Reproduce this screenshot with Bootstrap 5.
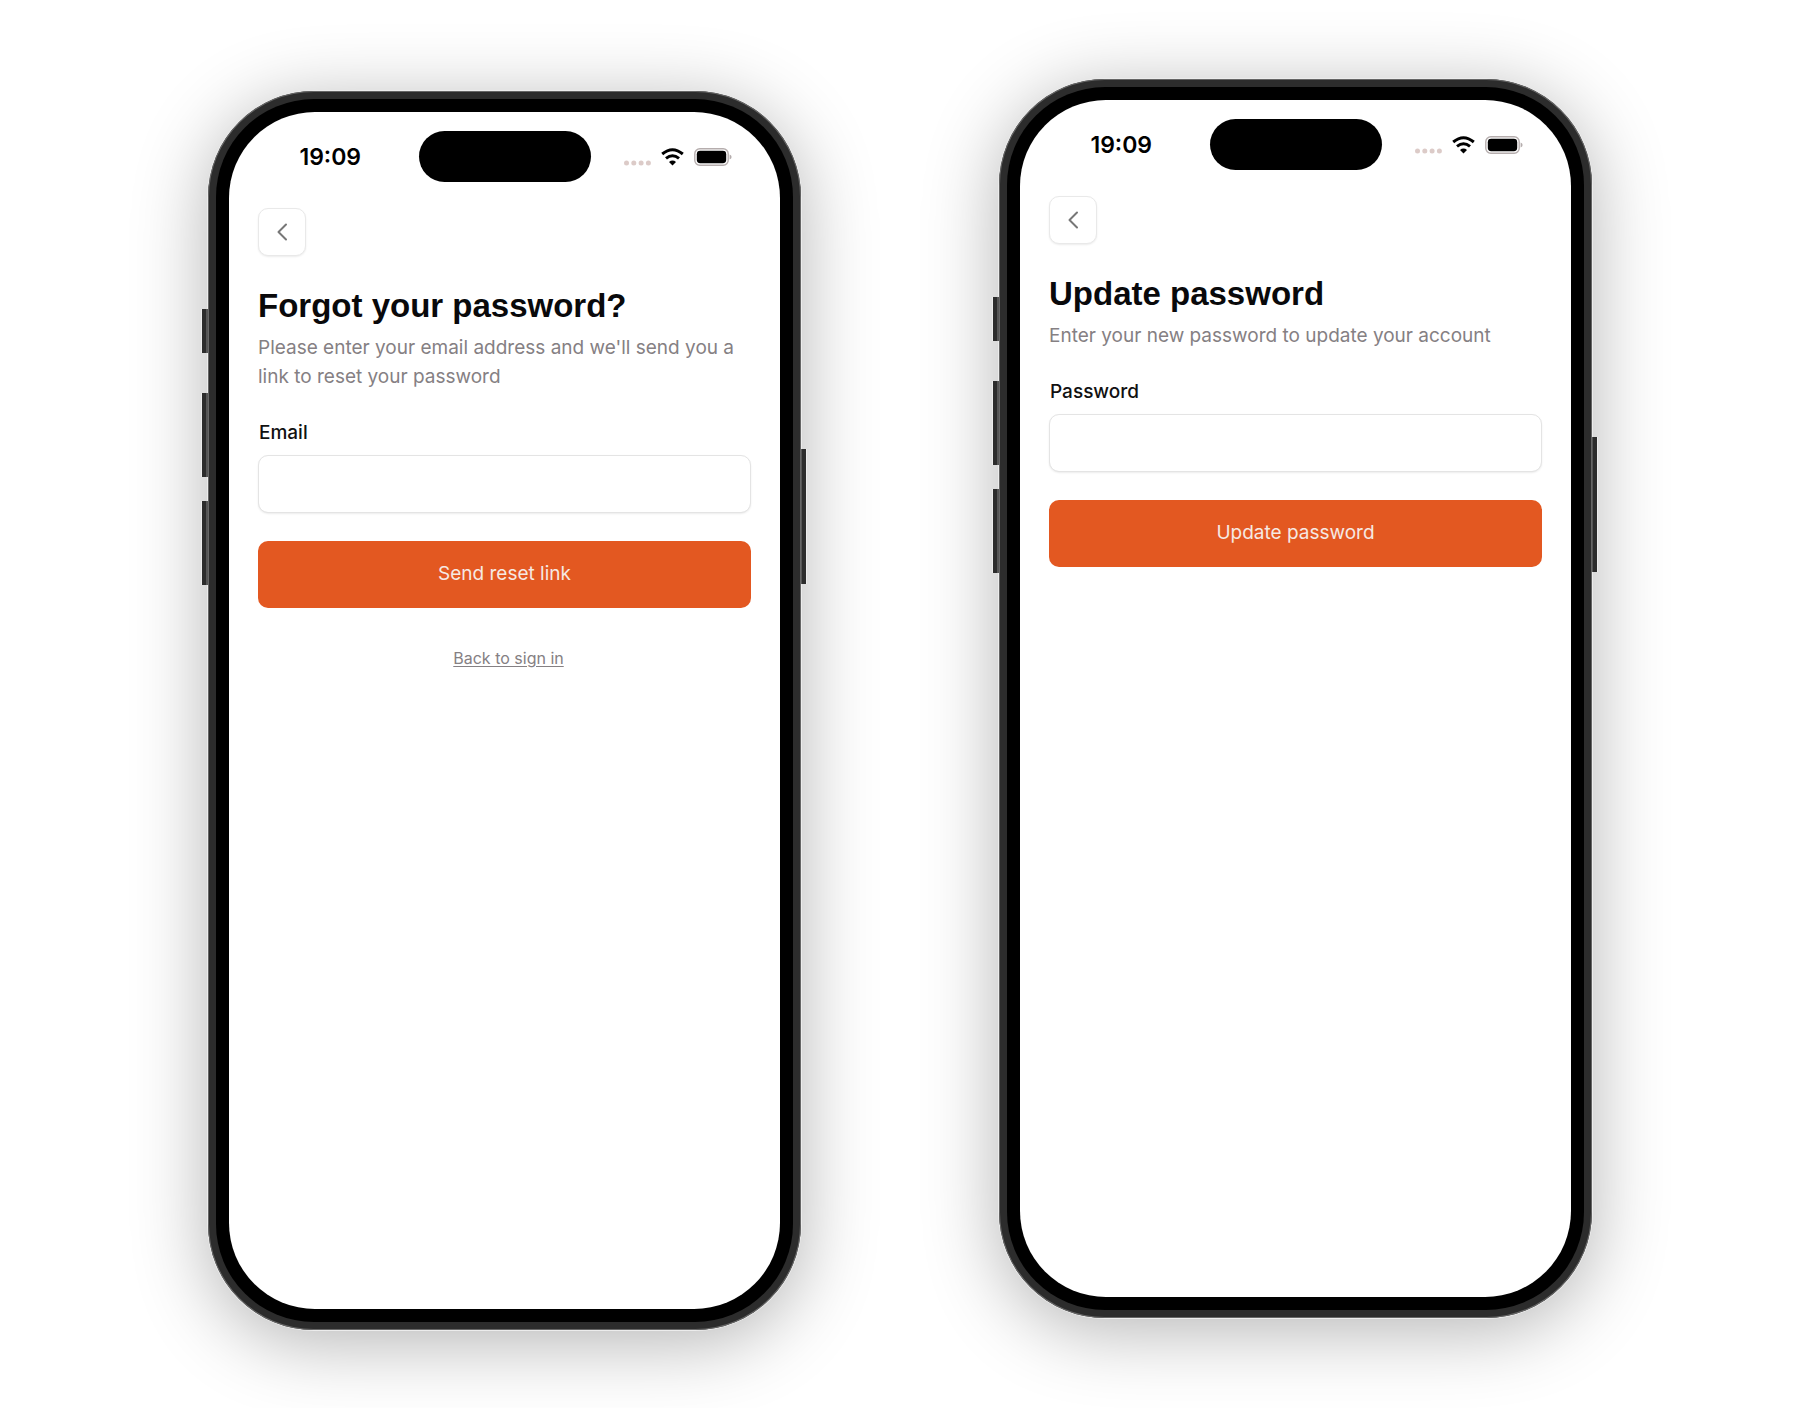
<!DOCTYPE html>
<html lang="en">
<head>
<meta charset="utf-8">
<meta name="viewport" content="width=device-width, initial-scale=1">
<title>Password recovery screens</title>
<link href="https://cdn.jsdelivr.net/npm/bootstrap@5.3.0/dist/css/bootstrap.min.css" rel="stylesheet">
<style>
  body { background: #fff; font-family: Inter, "Liberation Sans", sans-serif; }
  .stage { padding: 79px 16px 78px; column-gap: 186px; row-gap: 80px; }
  .device { flex: 0 1 605px; min-width: 0; }
  .device-lower { margin-top: 12px; }

  .rail { flex: 0 0 6px; position: relative; z-index: 3; }
  .rail span { display: block; background: #2c2c2c; }
  .rail-left { padding-top: 218px; }
  .rail-left span { border-right: 2px solid #555; box-shadow: -1px 0 0 #ececec; }
  .rail-right { padding-top: 358px; }
  .rail-right span { width: 5px; border-left: 1px solid #555; box-shadow: 1px 0 0 #ececec; }
  .key-small { height: 44px; margin-bottom: 40px; }
  .key-tall { height: 84px; margin-bottom: 24px; }
  .key-power { height: 135px; }

  .shell {
    min-width: 0; padding: 8px; border-radius: 106px; background: #2c2c2c;
    box-shadow: inset 0 0 0 1px #666, 0 0 0 1px #ececec, 0 12px 76px rgba(0, 0, 0, .3);
    position: relative; z-index: 2;
  }
  .bezel { padding: 13px; border-radius: 98px; background: #000; }
  .screen { min-height: 1197px; border-radius: 86px; background: #fff; }

  .status { display: grid; grid-template-columns: 1fr 172px 1fr; align-items: center; padding-top: 19px; }
  .clock { padding-left: 13px; font-size: 23px; font-weight: 600; line-height: 30px; color: #000; }
  .island { height: 51px; border-radius: 26px; background: #000; }
  .signals { padding-left: 33px; gap: 10px; }

  .content { padding: 26px 29px 29px; }
  .back { width: 48px; height: 48px; border: 1px solid #e9e9e9; border-radius: 10px; background: #fff; box-shadow: 0 1px 2px rgba(0, 0, 0, .08); }
  .title { margin: 30px 0 7px; font: 700 33px/40px "Liberation Sans", Arial, sans-serif; color: #09090b; }
  .intro { margin: 0 0 30px; font-size: 19px; line-height: 29px; color: #858083; }
  .field-label { margin: 0 0 10px 1px; font-size: 19px; font-weight: 500; line-height: 24px; color: #111; }
  .field { height: 58px; border: 1px solid #e4e4e4; border-radius: 10px; font-size: 19px; box-shadow: 0 1px 2px rgba(0, 0, 0, .08); }
  .action { margin-top: 28px; height: 67px; border: 0; border-radius: 10px; font-size: 19px; color: #f6e9e3; background: #e35821; }
  .action:hover { background: #cc4c19; color: #fff; }
  .return { margin-top: 38px; line-height: 24px; }
  .return a { font-size: 16px; color: #858083; text-underline-offset: 2px; }
</style>
</head>
<body>
<main class="stage d-flex flex-wrap justify-content-center align-items-start">

  <section class="device device-lower d-flex" aria-label="Forgot your password">
    <div class="rail rail-left"><span class="key-small"></span><span class="key-tall"></span><span class="key-tall"></span></div>
    <div class="shell flex-grow-1">
      <div class="bezel">
        <div class="screen">
          <div class="status">
            <div class="clock text-center">19:09</div>
            <div class="island"></div>
            <div class="signals d-flex align-items-center">
              <svg width="27" height="18" viewBox="0 0 27 18" fill="#dccbc8" aria-hidden="true"><circle cx="2.5" cy="15" r="2.5"/><circle cx="9.8" cy="15" r="2.5"/><circle cx="17.1" cy="15" r="2.5"/><circle cx="24.4" cy="15" r="2.5"/></svg>
              <svg width="23" height="18" viewBox="0 0 23 18" aria-hidden="true"><path d="M1.2 6Q11.5-2.6 21.8 6M5 10.4q6.5-5.4 13 0" fill="none" stroke="#000" stroke-width="3"/><path d="M11.5 17.4 8 13.9q3.5-2.8 7 0z"/></svg>
              <svg width="38" height="18" viewBox="0 0 38 18" aria-hidden="true"><rect x=".8" y=".8" width="33.4" height="16.4" rx="5" fill="#fff" stroke="#b5adad" stroke-width="1.4"/><rect x="2.8" y="2.8" width="29.4" height="12.4" rx="3.4"/><path d="M35.6 6.4q2 .9 2 2.6t-2 2.6z" fill="#b5adad"/></svg>
            </div>
          </div>
          <div class="content">
            <button type="button" class="back d-flex align-items-center justify-content-center p-0" aria-label="Go back">
              <svg width="24" height="24" viewBox="0 0 24 24" fill="none" stroke="#777" stroke-width="2" stroke-linecap="round" stroke-linejoin="round"><path d="m16 4.5-7.5 7.5 7.5 7.5"/></svg>
            </button>
            <h1 class="title">Forgot your password?</h1>
            <p class="intro">Please enter your email address and we'll send you a link to reset your password</p>
            <form>
              <label class="field-label d-block" for="email">Email</label>
              <input class="field form-control" type="email" id="email">
              <button class="action btn w-100" type="button">Send reset link</button>
            </form>
            <div class="return text-center ps-2"><a href="#">Back to sign in</a></div>
          </div>
        </div>
      </div>
    </div>
    <div class="rail rail-right"><span class="key-power"></span></div>
  </section>

  <section class="device d-flex" aria-label="Update password">
    <div class="rail rail-left"><span class="key-small"></span><span class="key-tall"></span><span class="key-tall"></span></div>
    <div class="shell flex-grow-1">
      <div class="bezel">
        <div class="screen">
          <div class="status">
            <div class="clock text-center">19:09</div>
            <div class="island"></div>
            <div class="signals d-flex align-items-center">
              <svg width="27" height="18" viewBox="0 0 27 18" fill="#dccbc8" aria-hidden="true"><circle cx="2.5" cy="15" r="2.5"/><circle cx="9.8" cy="15" r="2.5"/><circle cx="17.1" cy="15" r="2.5"/><circle cx="24.4" cy="15" r="2.5"/></svg>
              <svg width="23" height="18" viewBox="0 0 23 18" aria-hidden="true"><path d="M1.2 6Q11.5-2.6 21.8 6M5 10.4q6.5-5.4 13 0" fill="none" stroke="#000" stroke-width="3"/><path d="M11.5 17.4 8 13.9q3.5-2.8 7 0z"/></svg>
              <svg width="38" height="18" viewBox="0 0 38 18" aria-hidden="true"><rect x=".8" y=".8" width="33.4" height="16.4" rx="5" fill="#fff" stroke="#b5adad" stroke-width="1.4"/><rect x="2.8" y="2.8" width="29.4" height="12.4" rx="3.4"/><path d="M35.6 6.4q2 .9 2 2.6t-2 2.6z" fill="#b5adad"/></svg>
            </div>
          </div>
          <div class="content">
            <button type="button" class="back d-flex align-items-center justify-content-center p-0" aria-label="Go back">
              <svg width="24" height="24" viewBox="0 0 24 24" fill="none" stroke="#777" stroke-width="2" stroke-linecap="round" stroke-linejoin="round"><path d="m16 4.5-7.5 7.5 7.5 7.5"/></svg>
            </button>
            <h1 class="title">Update password</h1>
            <p class="intro">Enter your new password to update your account</p>
            <form>
              <label class="field-label d-block" for="password">Password</label>
              <input class="field form-control" type="password" id="password">
              <button class="action btn w-100" type="button">Update password</button>
            </form>
          </div>
        </div>
      </div>
    </div>
    <div class="rail rail-right"><span class="key-power"></span></div>
  </section>

</main>
<script src="https://cdn.jsdelivr.net/npm/bootstrap@5.3.0/dist/js/bootstrap.bundle.min.js"></script>
</body>
</html>
